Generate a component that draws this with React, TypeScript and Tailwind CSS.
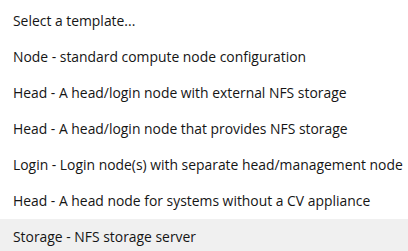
const OPTIONS = [
  'Select a template...',
  'Node - standard compute node configuration',
  'Head - A head/login node with external NFS storage',
  'Head - A head/login node that provides NFS storage',
  'Login - Login node(s) with separate head/management node',
  'Head - A head node for systems without a CV appliance',
  'Storage - NFS storage server',
];

export default function App() {
  return (
    <div className="w-[408px] h-[251px] overflow-hidden bg-white pt-[3px]" style={{ fontFamily: '"Open Sans", "Liberation Sans", sans-serif' }}>
      <ul className="flex flex-col">
        {OPTIONS.map((label, i) => (
          <li
            key={i}
            className={
              i === OPTIONS.length - 1
                ? 'h-9 flex items-center pl-[13px] text-[13.9px] text-[#151515] bg-[#f0f0f0] whitespace-nowrap'
                : 'h-9 flex items-center pl-[13px] text-[13.9px] text-[#151515] whitespace-nowrap'
            }
          >
            {label}
          </li>
        ))}
      </ul>
    </div>
  );
}
